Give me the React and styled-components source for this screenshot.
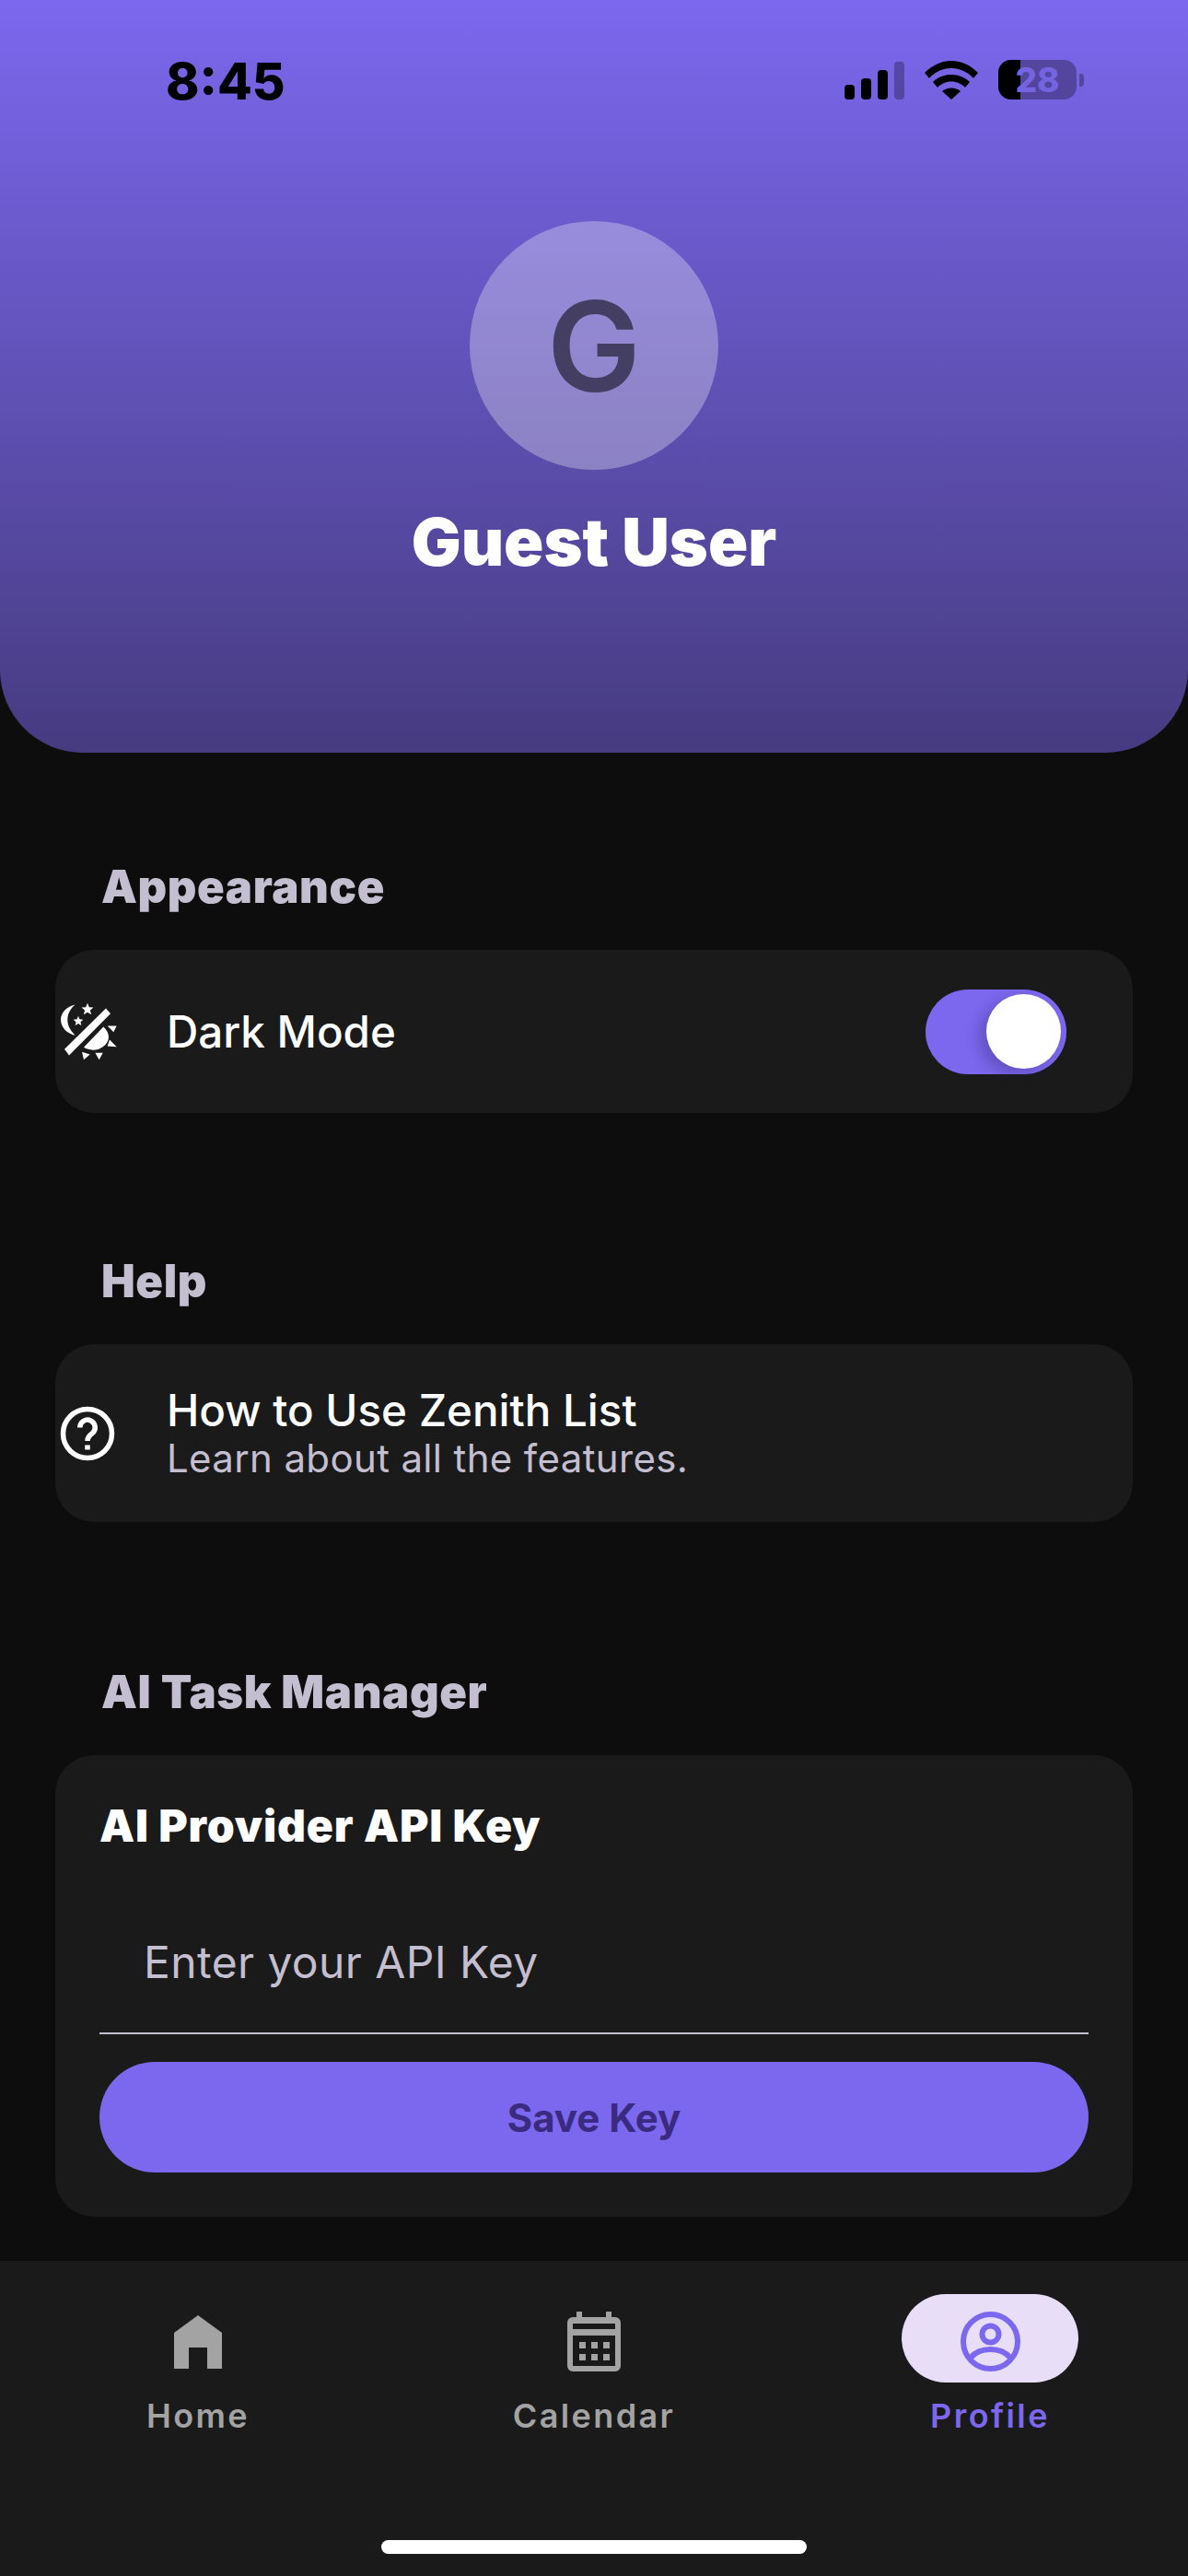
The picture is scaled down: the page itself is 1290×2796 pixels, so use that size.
import React from 'react';
import styled, { createGlobalStyle } from 'styled-components';

const GlobalStyle = createGlobalStyle`
  html, body {
    margin: 0;
    padding: 0;
    background: #0d0d0d;
  }
  * {
    box-sizing: border-box;
  }
`;

const Screen = styled.div`
  position: relative;
  width: 1290px;
  height: 2796px;
  overflow: hidden;
  background: #0d0d0d;
  font-family: Inter, "Liberation Sans", sans-serif;
  display: flex;
  flex-direction: column;
`;

const Header = styled.header`
  height: 817px;
  flex: none;
  background: linear-gradient(180deg, #7b68ee 0%, #463b80 100%);
  border-radius: 0 0 90px 90px;
  display: flex;
  flex-direction: column;
  align-items: center;
`;

const StatusBar = styled.div`
  width: 100%;
  height: 240px;
  flex: none;
  padding: 60px 113px 0 180px;
  display: flex;
  justify-content: space-between;
  align-items: flex-start;
`;

const Clock = styled.span`
  font-weight: 800;
  font-size: 55px;
  line-height: 56px;
  color: #000;
`;

const StatusIcons = styled.div`
  display: flex;
  align-items: center;
  gap: 22px;
  margin-top: 5px;
`;

const Battery = styled.div`
  position: relative;
  width: 85px;
  height: 43px;
  margin-right: 8px;
  border-radius: 14px;
  background: rgba(50, 40, 90, 0.5);
  display: flex;
  align-items: center;
  justify-content: center;
  font-weight: 800;
  font-size: 37px;
  color: #7464e2;

  &::before {
    content: '';
    position: absolute;
    left: 0;
    top: 0;
    bottom: 0;
    width: 24px;
    border-radius: 14px 0 0 14px;
    background: #000;
  }

  &::after {
    content: '';
    position: absolute;
    right: -8px;
    top: 15px;
    width: 5px;
    height: 14px;
    border-radius: 0 4px 4px 0;
    background: rgba(50, 40, 90, 0.5);
  }
`;

const BatteryLevel = styled.span`
  position: relative;
  z-index: 1;
  line-height: 43px;
`;

const Avatar = styled.div`
  width: 270px;
  height: 270px;
  flex: none;
  border-radius: 50%;
  background: rgba(255, 255, 255, 0.3);
  display: flex;
  align-items: center;
  justify-content: center;
  font-size: 136px;
  font-weight: 600;
  color: #443e62;
`;

const UserName = styled.h1`
  margin: 38px 0 0;
  font-size: 71.5px;
  line-height: 80px;
  font-weight: 900;
  color: #fff;
`;

const Content = styled.main`
  flex: 1;
  padding: 0 60px;
`;

const Section = styled.section`
  padding-top: ${p => p.$top}px;
`;

const SectionTitle = styled.h2`
  margin: 0 0 40px 50px;
  font-size: 49px;
  line-height: 56px;
  font-weight: 900;
  letter-spacing: 0.6px;
  color: #c4bfd0;
`;

const Card = styled.div`
  background: #1a1a1a;
  border-radius: 42px;
`;

const Row = styled(Card)`
  height: ${p => p.$height}px;
  display: flex;
  align-items: center;
  padding-left: 5px;
`;

const RowIcon = styled.div`
  width: 116px;
  flex: none;
  display: flex;
  align-items: center;
`;

const RowText = styled.div`
  flex: 1;
  display: flex;
  flex-direction: column;
`;

const RowTitle = styled.span`
  font-size: 47.5px;
  line-height: 54px;
  font-weight: 500;
  color: #fff;
`;

const RowSubtitle = styled.span`
  font-size: 42px;
  line-height: 50px;
  letter-spacing: 0.35px;
  color: #c4bfd0;
`;

const Toggle = styled.div`
  width: 153px;
  height: 92px;
  margin-right: 72px;
  border-radius: 46px;
  background: #7b68ee;
  display: flex;
  align-items: center;
  justify-content: flex-end;
  padding-right: 6px;
`;

const Knob = styled.div`
  width: 81px;
  height: 81px;
  border-radius: 50%;
  background: #fff;
  box-shadow: -8px 6px 16px rgba(40, 30, 90, 0.3);
`;

const KeyCard = styled(Card)`
  padding: 48px 48px 48px;
`;

const KeyTitle = styled.h3`
  margin: 0;
  font-size: 48px;
  line-height: 58px;
  font-weight: 900;
  letter-spacing: 0.85px;
  color: #fff;
`;

const KeyField = styled.div`
  margin-top: 51px;
  height: 146px;
  padding: 0 48px 10px;
  display: flex;
  align-items: center;
  border-bottom: 2px solid #c4bfd0;
  font-size: 48px;
  letter-spacing: 0.4px;
  color: #c4bfd0;
`;

const SaveButton = styled.button`
  display: block;
  width: 100%;
  height: 120px;
  margin-top: 30px;
  border: 0;
  border-radius: 60px;
  background: #7b68ee;
  font-family: inherit;
  font-size: 42px;
  font-weight: 700;
  color: #3a2a80;
`;

const BottomNav = styled.nav`
  position: absolute;
  left: 0;
  right: 0;
  bottom: 0;
  height: 342px;
  background: #1a1a1a;
  display: grid;
  grid-template-columns: repeat(3, 1fr);
  padding-top: 36px;
`;

const NavItem = styled.div`
  display: flex;
  flex-direction: column;
  align-items: center;
  color: ${p => (p.$active ? '#7b68ee' : '#a3a3a3')};
`;

const NavIcon = styled.div`
  width: 192px;
  height: 96px;
  padding-top: 7px;
  border-radius: 48px;
  background: ${p => (p.$active ? '#e8def8' : 'transparent')};
  display: flex;
  align-items: center;
  justify-content: center;
`;

const NavLabel = styled.span`
  margin-top: 12px;
  font-size: 36px;
  line-height: 48px;
  font-weight: 600;
  letter-spacing: 2.4px;
`;

const HomeIndicator = styled.div`
  position: absolute;
  left: 414px;
  bottom: 24px;
  width: 462px;
  height: 15px;
  border-radius: 8px;
  background: #fff;
`;

const SignalIcon = () => (
  <svg width="65" height="42" viewBox="0 0 65 42">
    <rect x="0" y="26" width="11" height="16" rx="4" fill="#000" />
    <rect x="18" y="19" width="11" height="23" rx="4" fill="#000" />
    <rect x="36" y="10" width="11" height="32" rx="4" fill="#000" />
    <rect x="54" y="1" width="11" height="41" rx="4" fill="#000" opacity="0.28" />
  </svg>
);

const WifiIcon = () => (
  <svg width="58" height="42" viewBox="0 0 58 42" fill="#000">
    <path d="M29 0C18 0 8 5 0 13l5 6c6-7 15-11 24-11s18 4 24 11l5-6C50 5 40 0 29 0z" />
    <path d="M29 15c-8 0-15 3-20 8l5 6c4-4 9-6.500 15-6.500S40 25 44 29l5-6c-5-5-12-8-20-8z" />
    <path d="M29 29.500c-4 0-7 1.500-10 3.500l10 9 10-9c-3-2-6-3.500-10-3.500z" />
  </svg>
);

const ThemeIcon = () => (
  <svg width="65" height="67" viewBox="30 30 195 200" fill="#fff">
    <path d="M80 43C50 50 33 70 33 92c0 26 22 46 47 51-18-18-25-33-25-51 0-20 10-37 25-49z" />
    <path d="M120 38l5.500 13 14 1-10.700 9 3.400 14-12.200-7.500-12.200 7.500 3.400-14-10.700-9 14-1z" />
    <path d="M90 80l4.500 10.500 11.500 1-8.700 7.500 2.700 11.200-10-6-10 6 2.700-11.200-8.700-7.500 11.500-1z" />
    <path d="M180 55l15 17L60 208l-15-20z" />
    <path d="M172 115c23 20 23 50-2 65-20 15-45 12-62 2z" />
    <path d="M185 112h30l-10 20zM192 157l23 23-30-2zM145 200h25l-12 22zM102 197l26 8-20 17z" />
  </svg>
);

const HelpIcon = () => (
  <svg width="60" height="60" viewBox="0 0 24 24" fill="none" stroke="#fff" strokeWidth="2.2" strokeLinecap="butt">
    <circle cx="12" cy="12" r="10.600" />
    <path d="M8.700 9.400a3.300 3.300 0 1 1 5.400 2.500c-1.200 1-2.100 1.700-2.100 3.300" />
    <path d="M12 17v2" />
  </svg>
);

const HomeIcon = () => (
  <svg width="52" height="58" viewBox="0 0 52 58" fill="currentColor">
    <path d="M26 0l26 19v39H36V35H16v23H0V19z" />
  </svg>
);

const CalendarIcon = () => (
  <svg width="58" height="65" viewBox="0 0 58 65" fill="currentColor">
    <path fillRule="evenodd" d="M10 0h6v6h26V0h6v6h4a6 6 0 0 1 6 6v47a6 6 0 0 1-6 6H6a6 6 0 0 1-6-6V12a6 6 0 0 1 6-6h4zM6 13v6h46v-6zM6 26v33h46V26z" />
    <rect x="13" y="33" width="7" height="7" />
    <rect x="26" y="33" width="7" height="7" />
    <rect x="39" y="33" width="7" height="7" />
    <rect x="13" y="46" width="7" height="7" />
    <rect x="26" y="46" width="7" height="7" />
    <rect x="39" y="46" width="7" height="7" />
  </svg>
);

const ProfileIcon = () => (
  <svg width="65" height="65" viewBox="0 0 65 65" fill="none" stroke="currentColor" strokeWidth="6">
    <circle cx="32.500" cy="32.500" r="29.500" />
    <circle cx="32.500" cy="24.500" r="9" />
    <path d="M11 50c5-6 13-9 21.500-9S49 44 54 50" />
  </svg>
);

const App = () => (
  <Screen>
    <GlobalStyle />
    <Header>
      <StatusBar>
        <Clock>8:45</Clock>
        <StatusIcons>
          <SignalIcon />
          <WifiIcon />
          <Battery>
            <BatteryLevel>28</BatteryLevel>
          </Battery>
        </StatusIcons>
      </StatusBar>
      <Avatar>G</Avatar>
      <UserName>Guest User</UserName>
    </Header>
    <Content>
      <Section $top={118}>
        <SectionTitle>Appearance</SectionTitle>
        <Row $height={177}>
          <RowIcon><ThemeIcon /></RowIcon>
          <RowText>
            <RowTitle>Dark Mode</RowTitle>
          </RowText>
          <Toggle><Knob /></Toggle>
        </Row>
      </Section>
      <Section $top={155}>
        <SectionTitle>Help</SectionTitle>
        <Row $height={193}>
          <RowIcon><HelpIcon /></RowIcon>
          <RowText>
            <RowTitle>How to Use Zenith List</RowTitle>
            <RowSubtitle>Learn about all the features.</RowSubtitle>
          </RowText>
        </Row>
      </Section>
      <Section $top={157}>
        <SectionTitle>AI Task Manager</SectionTitle>
        <KeyCard>
          <KeyTitle>AI Provider API Key</KeyTitle>
          <KeyField>Enter your API Key</KeyField>
          <SaveButton>Save Key</SaveButton>
        </KeyCard>
      </Section>
    </Content>
    <BottomNav>
      <NavItem>
        <NavIcon><HomeIcon /></NavIcon>
        <NavLabel>Home</NavLabel>
      </NavItem>
      <NavItem>
        <NavIcon><CalendarIcon /></NavIcon>
        <NavLabel>Calendar</NavLabel>
      </NavItem>
      <NavItem $active>
        <NavIcon $active><ProfileIcon /></NavIcon>
        <NavLabel>Profile</NavLabel>
      </NavItem>
    </BottomNav>
    <HomeIndicator />
  </Screen>
);

export default App;
